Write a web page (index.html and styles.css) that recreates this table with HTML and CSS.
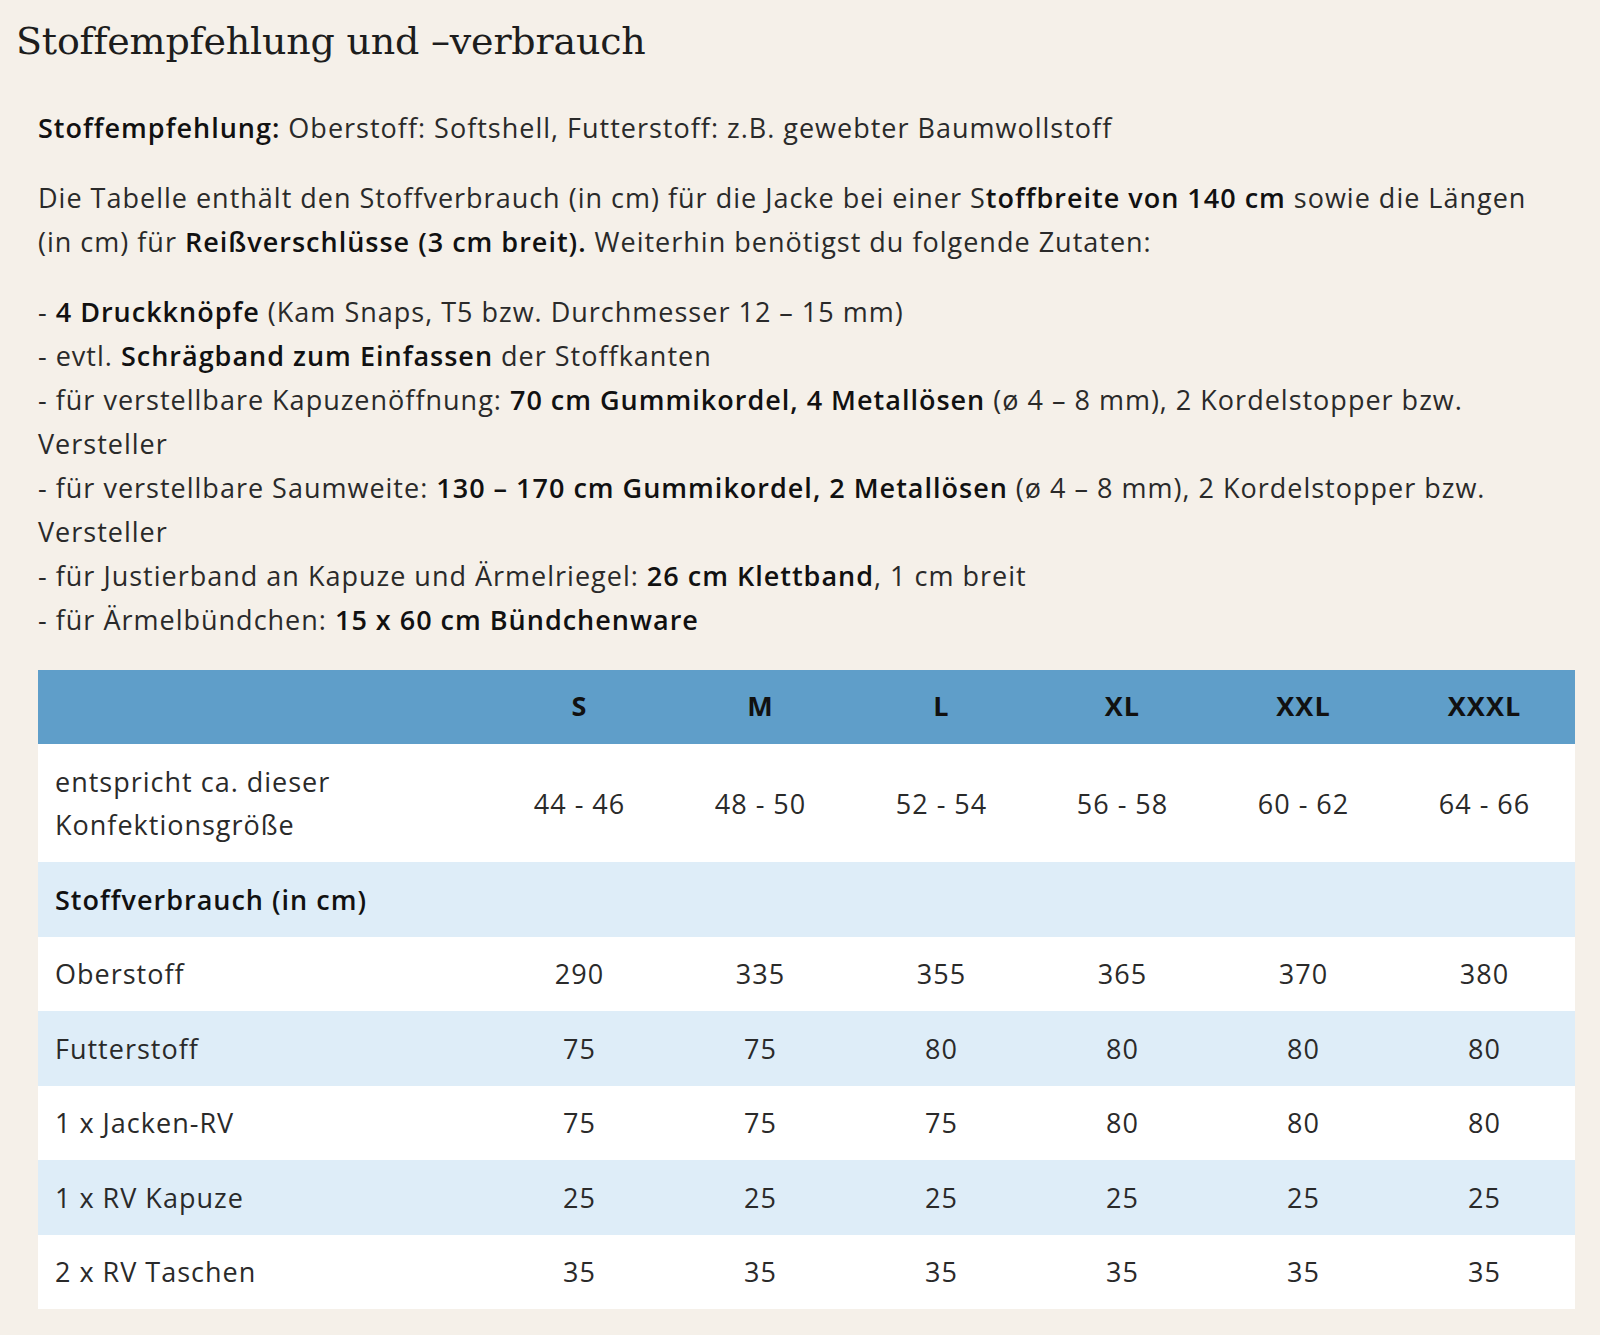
FILE: index.html
```html
<!DOCTYPE html>
<html lang="de">
<head>
<meta charset="utf-8">
<title>Stoffempfehlung und –verbrauch</title>
<link rel="stylesheet" href="styles.css">
</head>
<body>
<div class="page">
  <h2 class="title">Stoffempfehlung und –verbrauch</h2>
  <div class="content">
    <p class="para first"><b>Stoffempfehlung:</b> Oberstoff: Softshell, Futterstoff: z.B. gewebter Baumwollstoff</p>
    <p class="para">Die Tabelle enthält den Stoffverbrauch (in cm) für die Jacke bei einer S<b>toffbreite von 140 cm</b> sowie die Längen<br>(in cm) für <b>Reißverschlüsse (3 cm breit).</b> Weiterhin benötigst du folgende Zutaten:</p>
    <p class="para list">- <b>4 Druckknöpfe</b> (Kam Snaps, T5 bzw. Durchmesser 12 – 15 mm)<br>
- evtl. <b>Schrägband zum Einfassen</b> der Stoffkanten<br>
- für verstellbare Kapuzenöffnung: <b>70 cm Gummikordel, 4 Metallösen</b> (ø 4 – 8 mm), 2 Kordelstopper bzw.<br>Versteller<br>
- für verstellbare Saumweite: <b>130 – 170 cm Gummikordel, 2 Metallösen</b> (ø 4 – 8 mm), 2 Kordelstopper bzw.<br>Versteller<br>
- für Justierband an Kapuze und Ärmelriegel: <b>26 cm Klettband</b>, 1 cm breit<br>
- für Ärmelbündchen: <b>15 x 60 cm Bündchenware</b></p>

    <table class="sizes">
      <colgroup>
        <col class="c-label">
        <col class="c-size"><col class="c-size"><col class="c-size"><col class="c-size"><col class="c-size"><col class="c-size">
      </colgroup>
      <thead>
        <tr class="head"><th></th><th>S</th><th>M</th><th>L</th><th>XL</th><th>XXL</th><th>XXXL</th></tr>
      </thead>
      <tbody>
        <tr class="white tall"><td class="label">entspricht ca. dieser<br>Konfektionsgröße</td><td>44 - 46</td><td>48 - 50</td><td>52 - 54</td><td>56 - 58</td><td>60 - 62</td><td>64 - 66</td></tr>
        <tr class="blue"><td class="label"><b>Stoffverbrauch (in cm)</b></td><td></td><td></td><td></td><td></td><td></td><td></td></tr>
        <tr class="white"><td class="label">Oberstoff</td><td>290</td><td>335</td><td>355</td><td>365</td><td>370</td><td>380</td></tr>
        <tr class="blue"><td class="label">Futterstoff</td><td>75</td><td>75</td><td>80</td><td>80</td><td>80</td><td>80</td></tr>
        <tr class="white"><td class="label">1 x Jacken-RV</td><td>75</td><td>75</td><td>75</td><td>80</td><td>80</td><td>80</td></tr>
        <tr class="blue"><td class="label">1 x RV Kapuze</td><td>25</td><td>25</td><td>25</td><td>25</td><td>25</td><td>25</td></tr>
        <tr class="white"><td class="label">2 x RV Taschen</td><td>35</td><td>35</td><td>35</td><td>35</td><td>35</td><td>35</td></tr>
      </tbody>
    </table>
  </div>
</div>
</body>
</html>
```

FILE: styles.css
```css
html, body {
  margin: 0;
  padding: 0;
  background: #f5f0e9;
}

.page {
  padding: 14px 0 0 0;
  color: #222;
}

.title {
  margin: 0 0 0 16px;
  font-family: "DejaVu Serif", "Liberation Serif", serif;
  font-weight: 400;
  font-size: 38px;
  line-height: 54px;
  color: #1d1d1d;
  letter-spacing: -0.2px;
}

.content {
  padding: 0 10px 0 38px;
  font-family: "Open Sans", "Noto Sans", sans-serif;
  font-size: 27px;
  letter-spacing: 1px;
  color: #2a2a2a;
}

.para {
  margin: 0 0 26px 0;
  line-height: 44px;
  white-space: nowrap;
}

.para.first {
  margin-top: 38px;
}

.para b {
  font-weight: 600;
  color: #111;
}

.list {
  margin-bottom: 28px;
}

.sizes {
  width: 1537px;
  border-collapse: collapse;
  table-layout: fixed;
  font-size: 27px;
}

.c-label { width: 451px; }
.c-size { width: 181px; }

.sizes th, .sizes td {
  padding: 0;
  text-align: center;
  height: 74.5px;
}

.sizes th {
  height: 70px;
  padding-bottom: 4px;
}

.sizes .label {
  text-align: left;
  padding-left: 17px;
  line-height: 43px;
}

.head {
  background: #5f9ec9;
}

.head th {
  font-weight: 700;
  color: #111;
}

.white { background: #ffffff; }
.blue { background: #deedf8; }

.sizes .tall td { height: 118px; }

.sizes b { font-weight: 600; color: #111; }
```
